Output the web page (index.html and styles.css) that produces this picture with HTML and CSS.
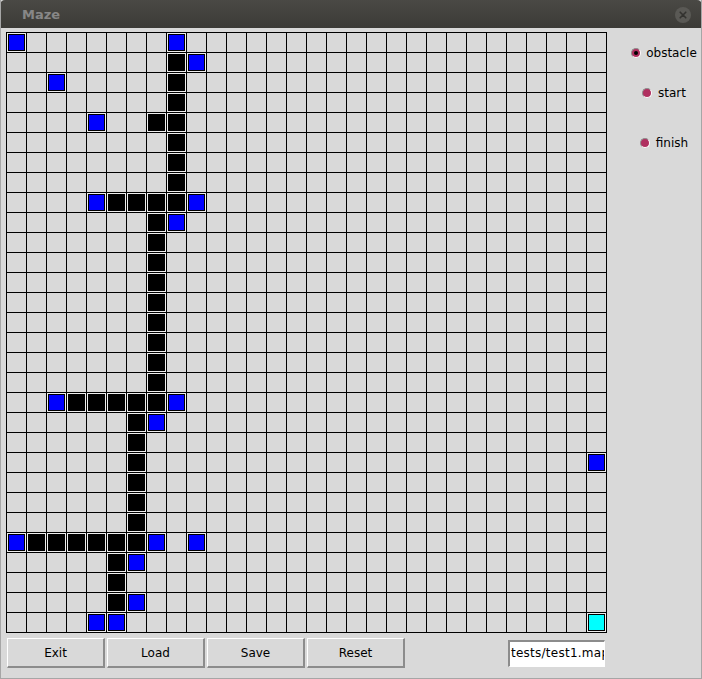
FILE: index.html
```html
<!DOCTYPE html>
<html>
<head>
<meta charset="utf-8">
<title>Maze</title>
<link rel="stylesheet" href="styles.css">
</head>
<body>
<div class="window">
  <div class="titlebar">
    <span class="title">Maze</span>
    <span class="close"><svg width="16" height="16" viewBox="0 0 16 16"><circle cx="8" cy="8" r="8" fill="#5a5955"/><path d="M5.2 5.2 L10.8 10.8 M10.8 5.2 L5.2 10.8" stroke="#33322f" stroke-width="1.6" stroke-linecap="round"/></svg></span>
  </div>
  <div class="content">
    <div class="top">
      <div class="board" id="board"></div>
      <div class="side">
        <label class="opt opt-obstacle"><span class="radio on"></span>obstacle</label>
        <label class="opt opt-start"><span class="radio"></span>start</label>
        <label class="opt opt-finish"><span class="radio"></span>finish</label>
      </div>
    </div>
    <div class="bottom">
      <button class="btn">Exit</button>
      <button class="btn">Load</button>
      <button class="btn">Save</button>
      <button class="btn">Reset</button>
      <div class="entry">tests/test1.map</div>
    </div>
  </div>
</div>
<script src="script.js"></script>
</body>
</html>
```
FILE: styles.css
```css
html, body {
  margin: 0;
  padding: 0;
  background: #d9d9d9;
}
.window {
  width: 702px;
  height: 679px;
  box-sizing: border-box;
  background: #d9d9d9;
  border-left: 1px solid #a6a6a6;
  border-right: 1px solid #a6a6a6;
  border-bottom: 1px solid #a6a6a6;
  font-family: "DejaVu Sans", sans-serif;
  font-size: 12px;
  color: #000;
  overflow: hidden;
}
.titlebar {
  height: 28px;
  margin: 0 -1px;
  background: linear-gradient(#4a4945, #3c3b37);
  border-radius: 5px 5px 0 0;
  display: flex;
  align-items: center;
  justify-content: space-between;
  padding: 0 11px 0 22px;
}
.title {
  font-weight: bold;
  font-size: 13px;
  color: #878787;
}
.close {
  display: flex;
  width: 16px;
  height: 16px;
  margin-top: 1px;
}
.content {
  padding: 4px 0 0 5px;
}
.top {
  display: flex;
}
.board {
  display: grid;
  grid-template-columns: repeat(30, 19px);
  grid-auto-rows: 19px;
  gap: 1px;
  background: #000;
  border: 1px solid #000;
}
.cell {
  background: #d9d9d9;
}
.cell.filled {
  background: #eeeeee;
  padding: 1px;
}
.sq {
  width: 15px;
  height: 15px;
  border: 1px solid #000;
}
.sq.blue { background: #0000ff; }
.sq.black { background: #000; }
.sq.cyan { background: #00ffff; }
.side {
  flex: 1;
  display: flex;
  flex-direction: column;
  align-items: center;
  padding-left: 20px;
}
.opt {
  display: flex;
  align-items: center;
  height: 20px;
  line-height: 20px;
}
.opt-obstacle { margin-top: 11px; }
.opt-start { margin-top: 20px; }
.opt-finish { margin-top: 30px; }
.radio {
  width: 8px;
  height: 8px;
  border-radius: 50%;
  background: #b03060;
  border: 1px solid;
  border-color: #8f8f8f #ffffff #ffffff #8f8f8f;
  margin-right: 5px;
  position: relative;
}
.radio.on::after {
  content: "";
  position: absolute;
  left: 2px;
  top: 2px;
  width: 4px;
  height: 4px;
  border-radius: 50%;
  background: #000;
}
.opt-start .radio { margin-right: 6px; }
.opt-finish .radio { margin-right: 6px; }
.bottom {
  display: flex;
  align-items: flex-start;
  padding-top: 5px;
  padding-left: 1px;
}
.btn {
  width: 98px;
  height: 30px;
  margin-right: 2px;
  box-sizing: border-box;
  background: #d9d9d9;
  border-style: solid;
  border-width: 1px 2px 2px 1px;
  border-color: #ffffff #8c8c8c #8c8c8c #ffffff;
  font-family: "DejaVu Sans", sans-serif;
  font-size: 12px;
  color: #000;
  padding: 0;
}
.entry {
  margin-left: 101px;
  margin-top: 2px;
  width: 97px;
  height: 27px;
  box-sizing: border-box;
  background: #ffffff;
  border-style: solid;
  border-width: 2px 1px 1px 2px;
  border-color: #8c8c8c #ffffff #ffffff #8c8c8c;
  padding: 0 0 0 1px;
  line-height: 23px;
  white-space: nowrap;
  overflow: hidden;
  font-size: 12px;
  letter-spacing: 0.25px;
}
```
FILE: script.js
```javascript
(function () {
  var N = 30;
  var grid = [];
  for (var r = 0; r < N; r++) {
    grid.push([]);
    for (var c = 0; c < N; c++) grid[r].push('');
  }
  function put(r, c, t) { grid[r][c] = t; }
  function hline(r, c0, c1, t) { for (var c = c0; c <= c1; c++) put(r, c, t); }
  function vline(c, r0, r1, t) { for (var r = r0; r <= r1; r++) put(r, c, t); }

  put(0, 0, 'blue'); put(0, 8, 'blue');
  vline(8, 1, 8, 'black'); put(1, 9, 'blue');
  put(2, 2, 'blue');
  put(4, 4, 'blue'); put(4, 7, 'black');
  put(8, 4, 'blue'); hline(8, 5, 8, 'black'); put(8, 9, 'blue');
  vline(7, 9, 17, 'black'); put(9, 8, 'blue');
  put(18, 2, 'blue'); hline(18, 3, 7, 'black'); put(18, 8, 'blue');
  vline(6, 19, 24, 'black'); put(19, 7, 'blue');
  put(21, 29, 'blue');
  put(25, 0, 'blue'); hline(25, 1, 6, 'black'); put(25, 7, 'blue'); put(25, 9, 'blue');
  vline(5, 26, 28, 'black'); put(26, 6, 'blue'); put(28, 6, 'blue');
  put(29, 4, 'blue'); put(29, 5, 'blue'); put(29, 29, 'cyan');

  var board = document.getElementById('board');
  var frag = document.createDocumentFragment();
  for (var r2 = 0; r2 < N; r2++) {
    for (var c2 = 0; c2 < N; c2++) {
      var cell = document.createElement('div');
      cell.className = 'cell';
      var t = grid[r2][c2];
      if (t) {
        cell.className = 'cell filled';
        var sq = document.createElement('div');
        sq.className = 'sq ' + t;
        cell.appendChild(sq);
      }
      frag.appendChild(cell);
    }
  }
  board.appendChild(frag);
})();
```
